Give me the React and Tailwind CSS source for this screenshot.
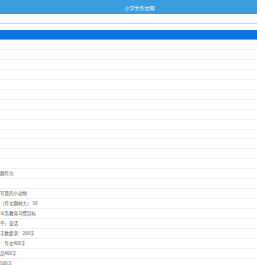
import React from 'react';

// rows of the list; most are empty in the shot
const rows = [
  '', '', '', '', '', '', '', '', '', '', '', '',
  '题作为',
  '',
  '写我的小动物',
  '（作文题材大） 50',
  '义务教育习惯目标',
  '乎）童话',
  '字数要求：200字',
  '：作文400字',
  '品400字',
  '500字',
];

export default function App() {
  return (
    <div
      className="w-[257px] h-[265px] overflow-hidden bg-white"
      style={{ fontFamily: '"Noto Sans CJK SC", "Noto Sans", sans-serif' }}
    >
      <div className="h-[14px] bg-[#3a9de0] flex items-center justify-center pl-[22px]">
        <span className="text-[5px] leading-none text-white">小学生作文网</span>
      </div>
      <div className="h-[10px] bg-white border-b border-[#c9d6de]" />
      <div className="h-[6px] bg-white" />
      <div className="h-[9px] bg-[#0a75dc]" />
      <div className="h-[1px] bg-[#74b2e6]" />
      <div className="h-[9px]" />
      {rows.map((t, i) => (
        <div
          key={i}
          className="h-[9.95px] border-t border-[#f0f0f0] flex items-center"
        >
          <span className="text-[4.5px] leading-none text-[#555] whitespace-nowrap">{t}</span>
        </div>
      ))}
    </div>
  );
}
